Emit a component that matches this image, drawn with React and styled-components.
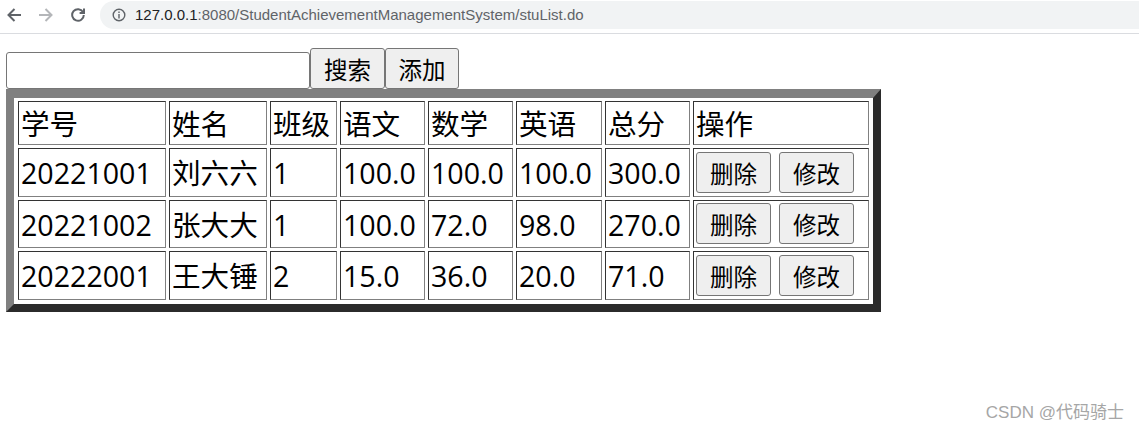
import * as React from "react";
import styled, { createGlobalStyle } from "styled-components";

const columns = [148, 98, 67, 85, 85, 86, 85, 176];
const headers = ["学号", "姓名", "班级", "语文", "数学", "英语", "总分", "操作"];
const students = [
  { cells: ["20221001", "刘六六", "1", "100.0", "100.0", "100.0", "300.0"], height: 49 },
  { cells: ["20221002", "张大大", "1", "100.0", "72.0", "98.0", "270.0"], height: 48 },
  { cells: ["20222001", "王大锤", "2", "15.0", "36.0", "20.0", "71.0"], height: 49 },
];

export default function App() {
  return (
    <>
      <GlobalStyle />
      <BrowserBar>
        <NavIcon viewBox="0 0 14 14">
          <path d="M14 7H1.5M7.5 1L1.5 7L7.5 13" />
        </NavIcon>
        <NavIcon viewBox="0 0 14 14" $disabled>
          <path d="M0 7H12.5M6.5 1L12.5 7L6.5 13" />
        </NavIcon>
        <NavIcon viewBox="0 0 14 14">
          <path d="M12 4A5.8 5.8 0 1 0 12.8 7M13 .6V5H8.6" />
        </NavIcon>
        <AddressPill>
          <InfoIcon viewBox="0 0 14 14">
            <circle cx="7" cy="7" r="5.8" />
            <path d="M7 6V10.4M7 3.4V5" />
          </InfoIcon>
          <Url>
            <UrlHost>127.0.0.1</UrlHost>:8080/StudentAchievementManagementSystem/stuList.do
          </Url>
        </AddressPill>
      </BrowserBar>
      <Page>
        <SearchRow>
          <SearchInput />
          <ToolButton>搜索</ToolButton>
          <ToolButton $w={74}>添加</ToolButton>
        </SearchRow>
        <ScoreTable>
          <colgroup>
            {columns.map((w, i) => (
              <Col key={i} $w={w} />
            ))}
          </colgroup>
          <tbody>
            <Row $h={44}>
              {headers.map((h) => (
                <Cell key={h}>{h}</Cell>
              ))}
            </Row>
            {students.map((s) => (
              <Row key={s.cells[0]} $h={s.height}>
                {s.cells.map((c, i) => (
                  <Cell key={i}>{c}</Cell>
                ))}
                <ActionCell>
                  <Actions>
                    <ToolButton>删除</ToolButton>
                    <ToolButton>修改</ToolButton>
                  </Actions>
                </ActionCell>
              </Row>
            ))}
          </tbody>
        </ScoreTable>
      </Page>
      <Watermark>CSDN @代码骑士</Watermark>
    </>
  );
}

const GlobalStyle = createGlobalStyle`
  html, body {
    margin: 0;
    padding: 0;
    background: #fff;
    height: 100%;
    overflow: hidden;
  }
  body {
    font-family: "Open Sans", "Noto Sans CJK SC", sans-serif;
  }
`;

const BrowserBar = styled.div`
  display: flex;
  align-items: flex-start;
  height: 34px;
  padding: 1px 0 0 7px;
  box-sizing: border-box;
  border-bottom: 1px solid #dadce0;
  background: #fff;
`;

const NavIcon = styled.svg`
  width: 14px;
  height: 14px;
  margin: 7px 18px 0 0;
  flex: none;
  fill: none;
  stroke: ${(p) => (p.$disabled ? "#b4b6b9" : "#5f6368")};
  stroke-width: 2;
`;

const AddressPill = styled.div`
  display: flex;
  align-items: center;
  flex: 1;
  height: 28px;
  margin-left: -3px;
  padding-left: 12px;
  background: #f1f3f4;
  border-radius: 14px 0 0 14px;
`;

const InfoIcon = styled.svg`
  width: 14px;
  height: 14px;
  flex: none;
  fill: none;
  stroke: #5f6368;
  stroke-width: 1.4;
`;

const Url = styled.div`
  margin-left: 9px;
  padding-bottom: 2px;
  font-family: "Liberation Sans", sans-serif;
  font-size: 15px;
  color: #5f6368;
  white-space: nowrap;
`;

const UrlHost = styled.span`
  color: #202124;
`;

const Page = styled.div`
  padding: 13px 0 0 6px;
`;

const SearchRow = styled.div`
  display: flex;
  align-items: flex-end;
  height: 42px;
`;

const SearchInput = styled.input`
  width: 304px;
  height: 37px;
  box-sizing: border-box;
  border: 1px solid #767676;
  border-radius: 3px;
  background: #fff;
  padding: 0;
`;

const ToolButton = styled.button`
  width: ${(p) => p.$w || 75}px;
  height: 41px;
  box-sizing: border-box;
  padding: 2px 0 0;
  border: 1px solid #767676;
  border-radius: 3px;
  background: #efefef;
  color: #000;
  font-family: "Noto Sans CJK SC", sans-serif;
  font-size: 23.5px;
  line-height: 1;
`;

const ScoreTable = styled.table`
  table-layout: fixed;
  border-collapse: separate;
  border-spacing: 3px;
  width: 875px;
  box-sizing: border-box;
  padding: 0 1px 1px;
  border-style: solid;
  border-width: 9px 8px 8px;
  border-color: #808080 #2b2b2b #2b2b2b #808080;
  color: #000;
  font-size: 28.6px;
`;

const Col = styled.col`
  width: ${(p) => p.$w}px;
`;

const Row = styled.tr`
  height: ${(p) => p.$h}px;
`;

const Cell = styled.td`
  box-sizing: border-box;
  padding: 2px 2px 0;
  border-style: solid;
  border-width: 1px;
  border-color: #333 #808080 #808080 #333;
  line-height: 1;
  white-space: nowrap;
  vertical-align: middle;
`;

const ActionCell = styled(Cell)`
  padding: 0 2px;
`;

const Actions = styled.div`
  display: flex;
  gap: 8px;
  margin-bottom: 0.5px;
`;

const Watermark = styled.div`
  position: absolute;
  right: 15px;
  top: 398px;
  font-family: "Liberation Sans", "Noto Sans CJK SC", sans-serif;
  font-size: 17px;
  color: #a6a6a6;
  white-space: nowrap;
`;
